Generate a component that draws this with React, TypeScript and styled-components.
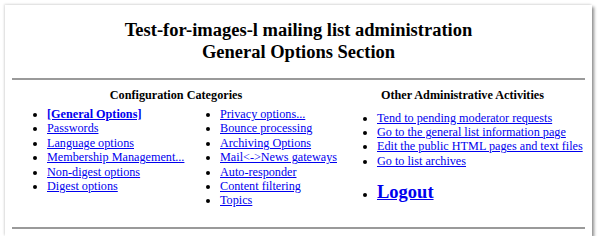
import React from 'react'
import styled, { createGlobalStyle } from 'styled-components'

const GlobalStyle = createGlobalStyle`
  html, body {
    margin: 0;
    padding: 0;
    background: #ffffff;
  }
  body {
    font-family: "Liberation Serif", "Times New Roman", serif;
    color: #000000;
  }
`

const configLeft = [
  { label: '[General Options]', bold: true },
  { label: 'Passwords' },
  { label: 'Language options' },
  { label: 'Membership Management...' },
  { label: 'Non-digest options' },
  { label: 'Digest options' },
]

const configRight = [
  { label: 'Privacy options...' },
  { label: 'Bounce processing' },
  { label: 'Archiving Options' },
  { label: 'Mail<->News gateways' },
  { label: 'Auto-responder' },
  { label: 'Content filtering' },
  { label: 'Topics' },
]

const otherLinks = [
  'Tend to pending moderator requests',
  'Go to the general list information page',
  'Edit the public HTML pages and text files',
  'Go to list archives',
]

const App = () => {
  return (
    <>
      <GlobalStyle />
      <StCard>
        {/* // Header */}
        <StTitle>
          Test-for-images-l mailing list administration
          <br />
          General Options Section
        </StTitle>
        <StRule />

        <StColumns>
          {/* // Configuration Categories */}
          <StConfigCol>
            <StColHeading>Configuration Categories</StColHeading>
            <StConfigLists>
              <StList>
                {configLeft.map((el) => (
                  <StItem key={el.label}>
                    <StLink href="#" $bold={el.bold}>{el.label}</StLink>
                  </StItem>
                ))}
              </StList>
              <StList>
                {configRight.map((el) => (
                  <StItem key={el.label}>
                    <StLink href="#">{el.label}</StLink>
                  </StItem>
                ))}
              </StList>
            </StConfigLists>
          </StConfigCol>

          {/* // Other Administrative Activities */}
          <StOtherCol>
            <StColHeading>Other Administrative Activities</StColHeading>
            <StOtherList>
              {otherLinks.map((el) => (
                <StItem key={el}>
                  <StLink href="#">{el}</StLink>
                </StItem>
              ))}
              <StLogoutItem>
                <StLogoutLink href="#">Logout</StLogoutLink>
              </StLogoutItem>
            </StOtherList>
          </StOtherCol>
        </StColumns>

        <StBottomRule />
      </StCard>
    </>
  )
}

// Card
const StCard = styled.div`
  box-sizing: border-box;
  display: flex;
  flex-direction: column;
  width: 587px;
  height: 231px;
  margin: 5px 0 0 5px;
  padding: 14px 7px 7px 7px;
  background: #ffffff;
  box-shadow: 2px 2px 3px rgba(0, 0, 0, 0.45), -1px -1px 2px rgba(0, 0, 0, 0.12);
`

// Header
const StTitle = styled.h2`
  margin: 0;
  font-size: 18.5px;
  font-weight: bold;
  line-height: 22px;
  text-align: center;
`
const StRule = styled.div`
  flex: none;
  height: 2px;
  margin-top: 15px;
  background: #9a9a9a;
`
const StBottomRule = styled(StRule)`
  margin-top: 0;
`

// Columns
const StColumns = styled.div`
  display: flex;
  flex: 1;
  padding-top: 8px;
`
const StConfigCol = styled.div`
  width: 328px;
`
const StOtherCol = styled.div`
  flex: 1;
  white-space: nowrap;
`
const StColHeading = styled.div`
  font-size: 12.2px;
  font-weight: bold;
  line-height: 14px;
  text-align: center;
`
const StConfigLists = styled.div`
  display: grid;
  grid-template-columns: 173px 1fr;
  padding-left: 35px;
  margin-top: 5px;
`
const StList = styled.ul`
  margin: 0;
  padding: 0;
  list-style: disc outside;
`
const StOtherList = styled(StList)`
  padding-left: 37px;
  margin-top: 8.5px;
`
const StItem = styled.li`
  font-size: 12.2px;
  line-height: 14.4px;
`
const StLogoutItem = styled(StItem)`
  margin-top: 12.5px;
  line-height: 22px;
`
const StLink = styled.a<{ $bold?: boolean }>`
  color: #0000ee;
  text-decoration: underline;
  font-weight: ${(p) => (p.$bold ? 'bold' : 'normal')};
`
const StLogoutLink = styled(StLink)`
  font-size: 18.5px;
  font-weight: bold;
`

export default App
